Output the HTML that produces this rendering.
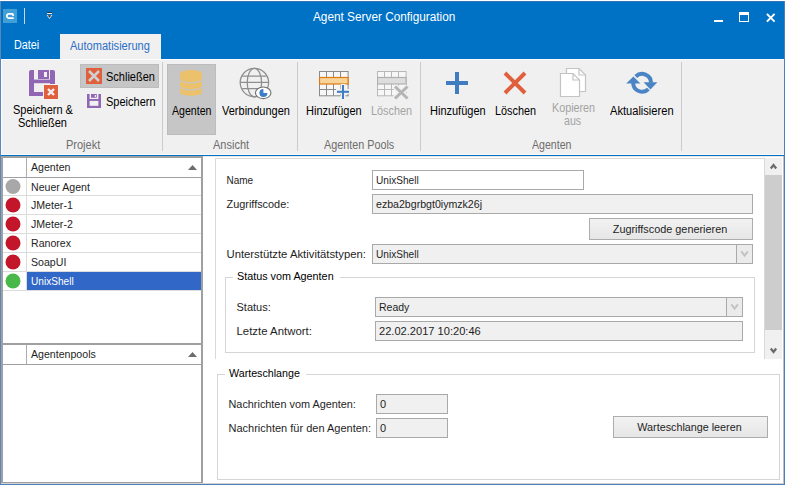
<!DOCTYPE html>
<html><head><meta charset="utf-8"><style>
html,body{margin:0;padding:0;width:786px;height:485px;overflow:hidden;background:#fff}
body{position:relative;font-family:"Liberation Sans", sans-serif}
body>div,body>svg{position:absolute}
</style></head><body>
<div style="left:0px;top:0px;width:786px;height:485px;background:#fff"></div>
<div style="left:0px;top:0px;width:785px;height:59px;background:#0072c6"></div>
<div style="left:0px;top:0px;width:786px;height:1px;background:#fff"></div>
<div style="left:0px;top:1px;width:785px;height:1px;background:#2f74bb"></div>
<div style="left:0px;top:1px;width:1px;height:484px;background:#5a87b8"></div>
<div style="left:784px;top:1px;width:1px;height:484px;background:#4a82c0"></div>
<div style="left:0px;top:484px;width:785px;height:1px;background:#4a82c0"></div>
<div style="left:3px;top:9px;width:14px;height:14px;background:#40a0d6"></div>
<svg style="left:3px;top:9px;" width="14" height="14" viewBox="0 0 14 14"><path d="M10.1 7.1 V5.7 A0.8 0.8 0 0 0 9.3 4.9 H6 A2.1 2.1 0 0 0 6 9.1 H10.7" fill="none" stroke="#fff" stroke-width="1.7"/></svg>
<div style="left:24px;top:8px;width:1px;height:16px;background:#c9d6e6"></div>
<svg style="left:44px;top:10px" width="12" height="12" viewBox="44 10 12 12"><rect x="47" y="12" width="5" height="1" fill="#333"/><rect x="47" y="13" width="5" height="1" fill="#e8f0f8"/><path d="M46.6 15 L52.4 15 L49.5 19 Z" fill="#e8f0f8"/><path d="M47.6 15.2 L51.4 15.2 L49.5 17.8 Z" fill="#333"/></svg>
<div style="left:313px;top:10px;font-size:12px;line-height:14px;color:#fff;white-space:nowrap;transform:scaleX(0.9833);transform-origin:0 0;">Agent Server Configuration</div>
<div style="left:714px;top:20px;width:9px;height:2px;background:#fff"></div>
<div style="left:739px;top:12px;width:10px;height:10px;border:1px solid #fff;border-top-width:3px;box-sizing:border-box"></div>
<svg style="left:766px;top:13px;" width="10" height="10" viewBox="0 0 10 10"><path d="M0.9 0.9 L8.6 8.6 M8.6 0.9 L0.9 8.6" stroke="#fff" stroke-width="2"/></svg>
<div style="left:14px;top:38px;font-size:12px;line-height:14px;color:#fff;white-space:nowrap;transform:scaleX(0.9000);transform-origin:0 0;">Datei</div>
<div style="left:60px;top:34px;width:101px;height:25px;background:#f0f0f0"></div>
<div style="left:70px;top:39px;font-size:12px;line-height:14px;color:#2b6fc6;white-space:nowrap;transform:scaleX(0.9208);transform-origin:0 0;">Automatisierung</div>
<div style="left:1px;top:59px;width:783px;height:96px;background:#f0f0f0"></div>
<div style="left:1px;top:59px;width:783px;height:1px;background:#fbfbfb"></div>
<div style="left:1px;top:59px;width:1px;height:96px;background:#fbfbfb"></div>
<div style="left:1px;top:154px;width:783px;height:1px;background:#fafafa"></div>
<div style="left:1px;top:155px;width:783px;height:1px;background:#0072c6"></div>
<div style="left:162px;top:62px;width:1px;height:89px;background:#cbcbcb"></div>
<div style="left:297px;top:62px;width:1px;height:89px;background:#cbcbcb"></div>
<div style="left:420px;top:62px;width:1px;height:89px;background:#cbcbcb"></div>
<div style="left:681px;top:62px;width:1px;height:89px;background:#cbcbcb"></div>
<div style="left:66px;top:138px;font-size:12px;line-height:14px;color:#6d6d6d;white-space:nowrap;transform:scaleX(0.9167);transform-origin:0 0;">Projekt</div>
<div style="left:213px;top:138px;font-size:12px;line-height:14px;color:#6d6d6d;white-space:nowrap;transform:scaleX(0.9167);transform-origin:0 0;">Ansicht</div>
<div style="left:324px;top:138px;font-size:12px;line-height:14px;color:#6d6d6d;white-space:nowrap;transform:scaleX(0.9000);transform-origin:0 0;">Agenten Pools</div>
<div style="left:532px;top:138px;font-size:12px;line-height:14px;color:#6d6d6d;white-space:nowrap;transform:scaleX(0.8833);transform-origin:0 0;">Agenten</div>
<svg style="left:26px;top:66px" width="36" height="36" viewBox="26 66 36 36">
<g fill="#9066b5">
<path d="M29 72 a2 2 0 0 1 2 -2 H34 V96 H31 a2 2 0 0 1 -2 -2 Z"/>
<path d="M50 70 H53 a2 2 0 0 1 2 2 V94 a2 2 0 0 1 -2 2 H50 Z"/>
<rect x="29" y="92" width="26" height="4"/>
<rect x="29" y="79.6" width="26" height="3.6"/>
<path d="M38 70 H49 V79 H38 Z M44 72 V77 H47 V72 Z" fill-rule="evenodd"/>
</g>
<rect x="43" y="84" width="16" height="16" fill="#f4f4f4"/>
<rect x="44" y="85" width="14" height="14" fill="#e0603e"/>
<path d="M48 89 L54 95 M54 89 L48 95" stroke="#f0f0f0" stroke-width="2.4"/>
</svg>
<div style="left:13px;top:103px;font-size:12px;line-height:14px;color:#000;white-space:nowrap;transform:scaleX(0.9167);transform-origin:0 0;">Speichern &amp;</div>
<div style="left:18px;top:116px;font-size:12px;line-height:14px;color:#000;white-space:nowrap;transform:scaleX(0.9167);transform-origin:0 0;">Schließen</div>
<div style="left:80px;top:64px;width:79px;height:24px;background:#c6c6c6;border:1px solid #bcbcbc;box-sizing:border-box"></div>
<div style="left:86px;top:68px;width:16px;height:16px;background:#e0603e"></div>
<svg style="left:86px;top:68px;" width="16" height="16" viewBox="0 0 16 16"><path d="M3 3 L13 13 M13 3 L3 13" stroke="#cfcfcf" stroke-width="2.6"/></svg>
<div style="left:106px;top:70px;font-size:12px;line-height:14px;color:#000;white-space:nowrap;transform:scaleX(0.9167);transform-origin:0 0;">Schließen</div>
<svg style="left:84px;top:91px" width="20" height="20" viewBox="84 91 20 20"><g fill="#9066b5"><rect x="87" y="94" width="2.6" height="14"/><rect x="98.4" y="94" width="2.6" height="14"/><rect x="87" y="105.8" width="14" height="2.2"/><rect x="87" y="99" width="14" height="1.9"/><path d="M91 94 H96.8 V97.8 H91 Z M94.8 94.9 V97 H96 V94.9 Z" fill-rule="evenodd"/></g></svg>
<div style="left:106px;top:95px;font-size:12px;line-height:14px;color:#000;white-space:nowrap;transform:scaleX(0.9167);transform-origin:0 0;">Speichern</div>
<div style="left:167px;top:64px;width:49px;height:71px;background:#c6c6c6;border:1px solid #bcbcbc;box-sizing:border-box"></div>
<svg style="left:176px;top:66px" width="30" height="34" viewBox="176 66 30 34">
<path d="M180 73.5 a11 3.6 0 0 1 22 0 V92.2 a11 3.6 0 0 1 -22 0 Z" fill="#ecc16c"/>
<path d="M180 79.3 a11 3.6 0 0 0 22 0 M180 86.3 a11 3.6 0 0 0 22 0" fill="none" stroke="#c6c6c6" stroke-width="1.15"/>
</svg>
<div style="left:172px;top:104px;font-size:12px;line-height:14px;color:#000;white-space:nowrap;transform:scaleX(0.8833);transform-origin:0 0;">Agenten</div>
<svg style="left:238px;top:66px;" width="36" height="34" viewBox="0 0 36 34">
<g fill="none" stroke="#8e8e8e" stroke-width="1.25">
<circle cx="16.4" cy="16.6" r="14.2"/>
<ellipse cx="16.4" cy="16.6" rx="7.2" ry="14.2"/>
<path d="M4.2 10 H28.6 M2.4 16.4 H30.4 M4.2 22.6 H28.6"/>
</g>
<ellipse cx="25.2" cy="26.8" rx="7.8" ry="5.8" fill="#fff" stroke="#707070" stroke-width="1.1"/>
<path d="M25.4 27 V23 a4 4 0 1 0 4 4 Z" fill="#3d7cc9"/>
</svg>
<div style="left:222px;top:104px;font-size:12px;line-height:14px;color:#000;white-space:nowrap;transform:scaleX(0.9167);transform-origin:0 0;">Verbindungen</div>
<svg style="left:318.5px;top:70.5px;" width="34" height="30" viewBox="0 0 34 30"><g fill="none" stroke="#8a8a8a" stroke-width="1"><rect x="0.5" y="0.5" width="28.6" height="24.3" fill="#f7f7f7"/><path d="M7.5 0.5 V24.8"/><path d="M14.5 0.5 V24.8"/><path d="M21.5 0.5 V24.8"/><path d="M0.5 18.5 H29.1"/></g><rect x="0.5" y="6.5" width="28.6" height="6.5" fill="#f8d49a" stroke="#e07b10" stroke-width="1.2"/></svg>
<svg style="left:334px;top:83px;" width="18" height="18" viewBox="0 0 18 18"><rect x="2" y="6" width="14" height="5" fill="#f0f0f0"/><rect x="6.5" y="1" width="5" height="16" fill="#f0f0f0"/><rect x="8" y="2" width="2" height="14" fill="#3f7ec4"/><rect x="3" y="7.8" width="12" height="2" fill="#3f7ec4"/></svg>
<div style="left:306px;top:104px;font-size:12px;line-height:14px;color:#000;white-space:nowrap;transform:scaleX(0.9167);transform-origin:0 0;">Hinzufügen</div>
<svg style="left:376.5px;top:70.5px;" width="34" height="30" viewBox="0 0 34 30"><g fill="none" stroke="#b8b8b8" stroke-width="1"><rect x="0.5" y="0.5" width="28.6" height="24.3" fill="#f7f7f7"/><path d="M7.5 0.5 V24.8"/><path d="M14.5 0.5 V24.8"/><path d="M21.5 0.5 V24.8"/><path d="M0.5 18.5 H29.1"/></g><rect x="0.5" y="6.5" width="28.6" height="6.5" fill="#dedede" stroke="#b0b0b0" stroke-width="1.2"/></svg>
<svg style="left:392px;top:84px;" width="18" height="17" viewBox="0 0 18 17"><path d="M3 2.5 L15.5 14.5 M15.5 2.5 L3 14.5" stroke="#f0f0f0" stroke-width="6"/><path d="M3 2.5 L15.5 14.5 M15.5 2.5 L3 14.5" stroke="#b4b4b4" stroke-width="3"/></svg>
<div style="left:371px;top:104px;font-size:12px;line-height:14px;color:#a3a3a3;white-space:nowrap;transform:scaleX(0.9042);transform-origin:0 0;">Löschen</div>
<div style="left:455px;top:72px;width:4px;height:22px;background:#3f7cc0"></div>
<div style="left:446px;top:81px;width:22px;height:4px;background:#3f7cc0"></div>
<div style="left:430px;top:104px;font-size:12px;line-height:14px;color:#000;white-space:nowrap;transform:scaleX(0.9167);transform-origin:0 0;">Hinzufügen</div>
<svg style="left:503px;top:71px;" width="24" height="24" viewBox="0 0 24 24"><path d="M2 2 L22 22 M22 2 L2 22" stroke="#e0603e" stroke-width="4"/></svg>
<div style="left:495px;top:104px;font-size:12px;line-height:14px;color:#000;white-space:nowrap;transform:scaleX(0.9042);transform-origin:0 0;">Löschen</div>
<svg style="left:559px;top:67px;" width="28" height="31" viewBox="0 0 28 31">
<path d="M7.5 1.5 H20 L26.5 8 V24.5 H7.5 Z" fill="#fff" stroke="#c4c4c4" stroke-width="1.2"/>
<path d="M20 1.5 V8 H26.5" fill="none" stroke="#c4c4c4" stroke-width="1.2"/>
<path d="M1.5 6.5 H14 L20.5 13 V29.5 H1.5 Z" fill="#fff" stroke="#c4c4c4" stroke-width="1.2"/>
<path d="M14 6.5 V13 H20.5" fill="none" stroke="#c4c4c4" stroke-width="1.2"/>
</svg>
<div style="left:551.5px;top:101px;font-size:12px;line-height:14px;color:#a3a3a3;white-space:nowrap;transform:scaleX(0.8958);transform-origin:0 0;">Kopieren</div>
<div style="left:564px;top:114px;font-size:12px;line-height:14px;color:#a3a3a3;white-space:nowrap;transform:scaleX(0.8833);transform-origin:0 0;">aus</div>
<svg style="left:622px;top:66px" width="40" height="32" viewBox="622 66 40 32">
<g fill="none" stroke="#4a84c4" stroke-width="4">
<path d="M635.8 76.5 A8.9 8.9 0 0 1 651 82.8"/>
<path d="M633.2 82.6 A8.9 8.9 0 0 0 648.4 89.1"/>
</g>
<path d="M643.6 82.2 H657.4 L650.4 89.4 Z" fill="#4a84c4"/>
<path d="M626.2 83.5 H640.4 L633.4 76.4 Z" fill="#4a84c4"/>
</svg>
<div style="left:610px;top:104px;font-size:12px;line-height:14px;color:#000;white-space:nowrap;transform:scaleX(0.9250);transform-origin:0 0;">Aktualisieren</div>
<div style="left:1px;top:156px;width:202px;height:328px;background:#fff"></div>
<div style="left:1px;top:156px;width:202px;height:2px;background:#a0a0a0"></div>
<div style="left:1px;top:156px;width:2px;height:327px;background:#a0a0a0"></div>
<div style="left:201px;top:156px;width:2px;height:327px;background:#a0a0a0"></div>
<div style="left:1px;top:482px;width:202px;height:1px;background:#a0a0a0"></div>
<div style="left:1px;top:483px;width:783px;height:1px;background:#d6d2ce"></div>
<div style="left:26px;top:158px;width:1px;height:19px;background:#acacac"></div>
<div style="left:3px;top:177px;width:198px;height:1px;background:#a0a0a0"></div>
<div style="left:31px;top:161px;font-size:10.6px;line-height:12px;color:#1e1e1e;white-space:nowrap;">Agenten</div>
<svg style="left:188px;top:165px;" width="9" height="5" viewBox="0 0 9 5"><path d="M0 5 L4.5 0 L9 5 Z" fill="#6d6d6d"/></svg>
<div style="left:26px;top:178px;width:1px;height:17px;background:#dcdcdc"></div>
<div style="left:3px;top:195px;width:198px;height:1px;background:#dcdcdc"></div>
<svg style="left:4px;top:178px" width="20" height="17" viewBox="4 178 20 17"><circle cx="13" cy="186.5" r="7.5" fill="#a8a8a8"/></svg>
<div style="left:31px;top:181px;font-size:10.6px;line-height:12px;color:#1e1e1e;white-space:nowrap;">Neuer Agent</div>
<div style="left:26px;top:196px;width:1px;height:18px;background:#dcdcdc"></div>
<div style="left:3px;top:214px;width:198px;height:1px;background:#dcdcdc"></div>
<svg style="left:4px;top:196px" width="20" height="18" viewBox="4 196 20 18"><circle cx="13" cy="205.0" r="7.5" fill="#c4162a"/></svg>
<div style="left:31px;top:199px;font-size:10.6px;line-height:12px;color:#1e1e1e;white-space:nowrap;">JMeter-1</div>
<div style="left:26px;top:215px;width:1px;height:18px;background:#dcdcdc"></div>
<div style="left:3px;top:233px;width:198px;height:1px;background:#dcdcdc"></div>
<svg style="left:4px;top:215px" width="20" height="18" viewBox="4 215 20 18"><circle cx="13" cy="224.0" r="7.5" fill="#c4162a"/></svg>
<div style="left:31px;top:218px;font-size:10.6px;line-height:12px;color:#1e1e1e;white-space:nowrap;">JMeter-2</div>
<div style="left:26px;top:234px;width:1px;height:18px;background:#dcdcdc"></div>
<div style="left:3px;top:252px;width:198px;height:1px;background:#dcdcdc"></div>
<svg style="left:4px;top:234px" width="20" height="18" viewBox="4 234 20 18"><circle cx="13" cy="243.0" r="7.5" fill="#c4162a"/></svg>
<div style="left:31px;top:237px;font-size:10.6px;line-height:12px;color:#1e1e1e;white-space:nowrap;">Ranorex</div>
<div style="left:26px;top:253px;width:1px;height:18px;background:#dcdcdc"></div>
<div style="left:3px;top:271px;width:198px;height:1px;background:#dcdcdc"></div>
<svg style="left:4px;top:253px" width="20" height="18" viewBox="4 253 20 18"><circle cx="13" cy="262.0" r="7.5" fill="#c4162a"/></svg>
<div style="left:31px;top:256px;font-size:10.6px;line-height:12px;color:#1e1e1e;white-space:nowrap;">SoapUI</div>
<div style="left:26px;top:272px;width:1px;height:18px;background:#dcdcdc"></div>
<div style="left:3px;top:290px;width:198px;height:1px;background:#dcdcdc"></div>
<svg style="left:4px;top:272px" width="20" height="18" viewBox="4 272 20 18"><circle cx="13" cy="281.0" r="7.5" fill="#48b848"/></svg>
<div style="left:27px;top:272px;width:174px;height:18px;background:#3168c8"></div>
<div style="left:31px;top:276px;font-size:10.1px;line-height:11px;color:#fff;white-space:nowrap;">UnixShell</div>
<div style="left:3px;top:343px;width:198px;height:2px;background:#a0a0a0"></div>
<div style="left:26px;top:345px;width:1px;height:19px;background:#acacac"></div>
<div style="left:3px;top:364px;width:198px;height:1px;background:#a0a0a0"></div>
<div style="left:31px;top:348px;font-size:10.6px;line-height:12px;color:#1e1e1e;white-space:nowrap;">Agentenpools</div>
<svg style="left:188px;top:352px;" width="9" height="5" viewBox="0 0 9 5"><path d="M0 5 L4.5 0 L9 5 Z" fill="#6d6d6d"/></svg>
<div style="left:203px;top:156px;width:581px;height:1px;background:#eceae8"></div>
<div style="left:215px;top:158px;width:550px;height:1px;background:#d9d9d9"></div>
<div style="left:215px;top:158px;width:1px;height:201px;background:#d9d9d9"></div>
<div style="left:764px;top:158px;width:1px;height:201px;background:#d9d9d9"></div>
<div style="left:765px;top:158px;width:17px;height:201px;background:#f0f0f0"></div>
<div style="left:765px;top:175px;width:17px;height:155px;background:#cdcdcd"></div>
<svg style="left:766px;top:160px" width="15" height="12" viewBox="766 160 15 12"><path d="M770.8 168.4 L773.5 165.1 L776.2 168.4" fill="none" stroke="#6a6a6a" stroke-width="2.3"/></svg>
<svg style="left:766px;top:344px" width="15" height="12" viewBox="766 344 15 12"><path d="M770.8 348.6 L773.5 351.9 L776.2 348.6" fill="none" stroke="#6a6a6a" stroke-width="2.3"/></svg>
<div style="left:783px;top:156px;width:1px;height:328px;background:#c4c0bc"></div>
<div style="left:226.5px;top:175px;font-size:10px;line-height:11px;color:#1e1e1e;white-space:nowrap;">Name</div>
<div style="left:372px;top:170px;width:212px;height:20px;background:#fff;border:1px solid #a9a9a9;box-sizing:border-box"></div>
<div style="left:376px;top:175px;font-size:10.1px;line-height:11px;color:#1e1e1e;white-space:nowrap;">UnixShell</div>
<div style="left:226.5px;top:198px;font-size:10.9px;line-height:12px;color:#1e1e1e;white-space:nowrap;">Zugriffscode:</div>
<div style="left:372px;top:194px;width:381px;height:20px;background:#f0f0f0;border:1px solid #a9a9a9;box-sizing:border-box"></div>
<div style="left:376px;top:198px;font-size:10.6px;line-height:12px;color:#1e1e1e;white-space:nowrap;">ezba2bgrbgt0iymzk26j</div>
<div style="left:589px;top:218px;width:164px;height:22px;background:linear-gradient(#f2f2f2,#e6e6e6);border:1px solid #adadad;box-sizing:border-box"></div>
<div style="left:588.0px;top:223px;font-size:10.87px;line-height:12px;color:#1e1e1e;white-space:nowrap;width:164px;text-align:center;">Zugriffscode generieren</div>
<div style="left:226.5px;top:248px;font-size:11.3px;line-height:12px;color:#1e1e1e;white-space:nowrap;">Unterstützte Aktivitätstypen:</div>
<div style="left:372px;top:244px;width:381px;height:20px;background:#f0f0f0;border:1px solid #a9a9a9;box-sizing:border-box"></div>
<div style="left:737px;top:245px;width:15px;height:18px;background:#ebebeb"></div>
<div style="left:736px;top:245px;width:1px;height:18px;background:#a9a9a9"></div>
<svg style="left:738px;top:248px" width="14" height="12" viewBox="738 248 14 12"><path d="M741.3 251.3 L744.6 255.6 L747.9 251.3" fill="none" stroke="#c2c2c2" stroke-width="1.9"/></svg>
<div style="left:376px;top:249px;font-size:10.1px;line-height:11px;color:#1e1e1e;white-space:nowrap;">UnixShell</div>
<div style="left:225px;top:277px;width:8px;height:1px;background:#d5d5d5"></div>
<div style="left:340px;top:277px;width:415px;height:1px;background:#d5d5d5"></div>
<div style="left:225px;top:277px;width:1px;height:76px;background:#d5d5d5"></div>
<div style="left:754px;top:277px;width:1px;height:76px;background:#d5d5d5"></div>
<div style="left:225px;top:352px;width:530px;height:1px;background:#d5d5d5"></div>
<div style="left:237px;top:270px;font-size:10.8px;line-height:12px;color:#000;white-space:nowrap;">Status vom Agenten</div>
<div style="left:236.5px;top:301px;font-size:11px;line-height:12px;color:#1e1e1e;white-space:nowrap;">Status:</div>
<div style="left:375px;top:297px;width:368px;height:20px;background:#f0f0f0;border:1px solid #a9a9a9;box-sizing:border-box"></div>
<div style="left:727px;top:298px;width:15px;height:18px;background:#ebebeb"></div>
<div style="left:726px;top:298px;width:1px;height:18px;background:#a9a9a9"></div>
<svg style="left:728px;top:301px" width="14" height="12" viewBox="728 301 14 12"><path d="M731.3 304.3 L734.6 308.6 L737.9 304.3" fill="none" stroke="#c2c2c2" stroke-width="1.9"/></svg>
<div style="left:379px;top:301px;font-size:10.5px;line-height:12px;color:#1e1e1e;white-space:nowrap;">Ready</div>
<div style="left:236.5px;top:325px;font-size:11.4px;line-height:12px;color:#1e1e1e;white-space:nowrap;">Letzte Antwort:</div>
<div style="left:375px;top:321px;width:368px;height:20px;background:#f0f0f0;border:1px solid #a9a9a9;box-sizing:border-box"></div>
<div style="left:379px;top:325px;font-size:11.1px;line-height:12px;color:#1e1e1e;white-space:nowrap;">22.02.2017 10:20:46</div>
<div style="left:217px;top:374px;width:8px;height:1px;background:#d5d5d5"></div>
<div style="left:306px;top:374px;width:474px;height:1px;background:#d5d5d5"></div>
<div style="left:217px;top:374px;width:1px;height:106px;background:#d5d5d5"></div>
<div style="left:779px;top:374px;width:1px;height:106px;background:#d5d5d5"></div>
<div style="left:217px;top:479px;width:563px;height:1px;background:#d5d5d5"></div>
<div style="left:229px;top:367px;font-size:10.7px;line-height:12px;color:#000;white-space:nowrap;">Warteschlange</div>
<div style="left:228.5px;top:398px;font-size:10.86px;line-height:12px;color:#1e1e1e;white-space:nowrap;">Nachrichten vom Agenten:</div>
<div style="left:376px;top:394px;width:72px;height:20px;background:#f0f0f0;border:1px solid #a9a9a9;box-sizing:border-box"></div>
<div style="left:380px;top:398px;font-size:11px;line-height:12px;color:#1e1e1e;white-space:nowrap;">0</div>
<div style="left:228.5px;top:422px;font-size:11px;line-height:12px;color:#1e1e1e;white-space:nowrap;">Nachrichten für den Agenten:</div>
<div style="left:376px;top:418px;width:72px;height:20px;background:#f0f0f0;border:1px solid #a9a9a9;box-sizing:border-box"></div>
<div style="left:380px;top:422px;font-size:11px;line-height:12px;color:#1e1e1e;white-space:nowrap;">0</div>
<div style="left:613px;top:416px;width:155px;height:22px;background:linear-gradient(#f2f2f2,#e6e6e6);border:1px solid #adadad;box-sizing:border-box"></div>
<div style="left:612.0px;top:421px;font-size:10.77px;line-height:12px;color:#1e1e1e;white-space:nowrap;width:155px;text-align:center;">Warteschlange leeren</div>
</body></html>
